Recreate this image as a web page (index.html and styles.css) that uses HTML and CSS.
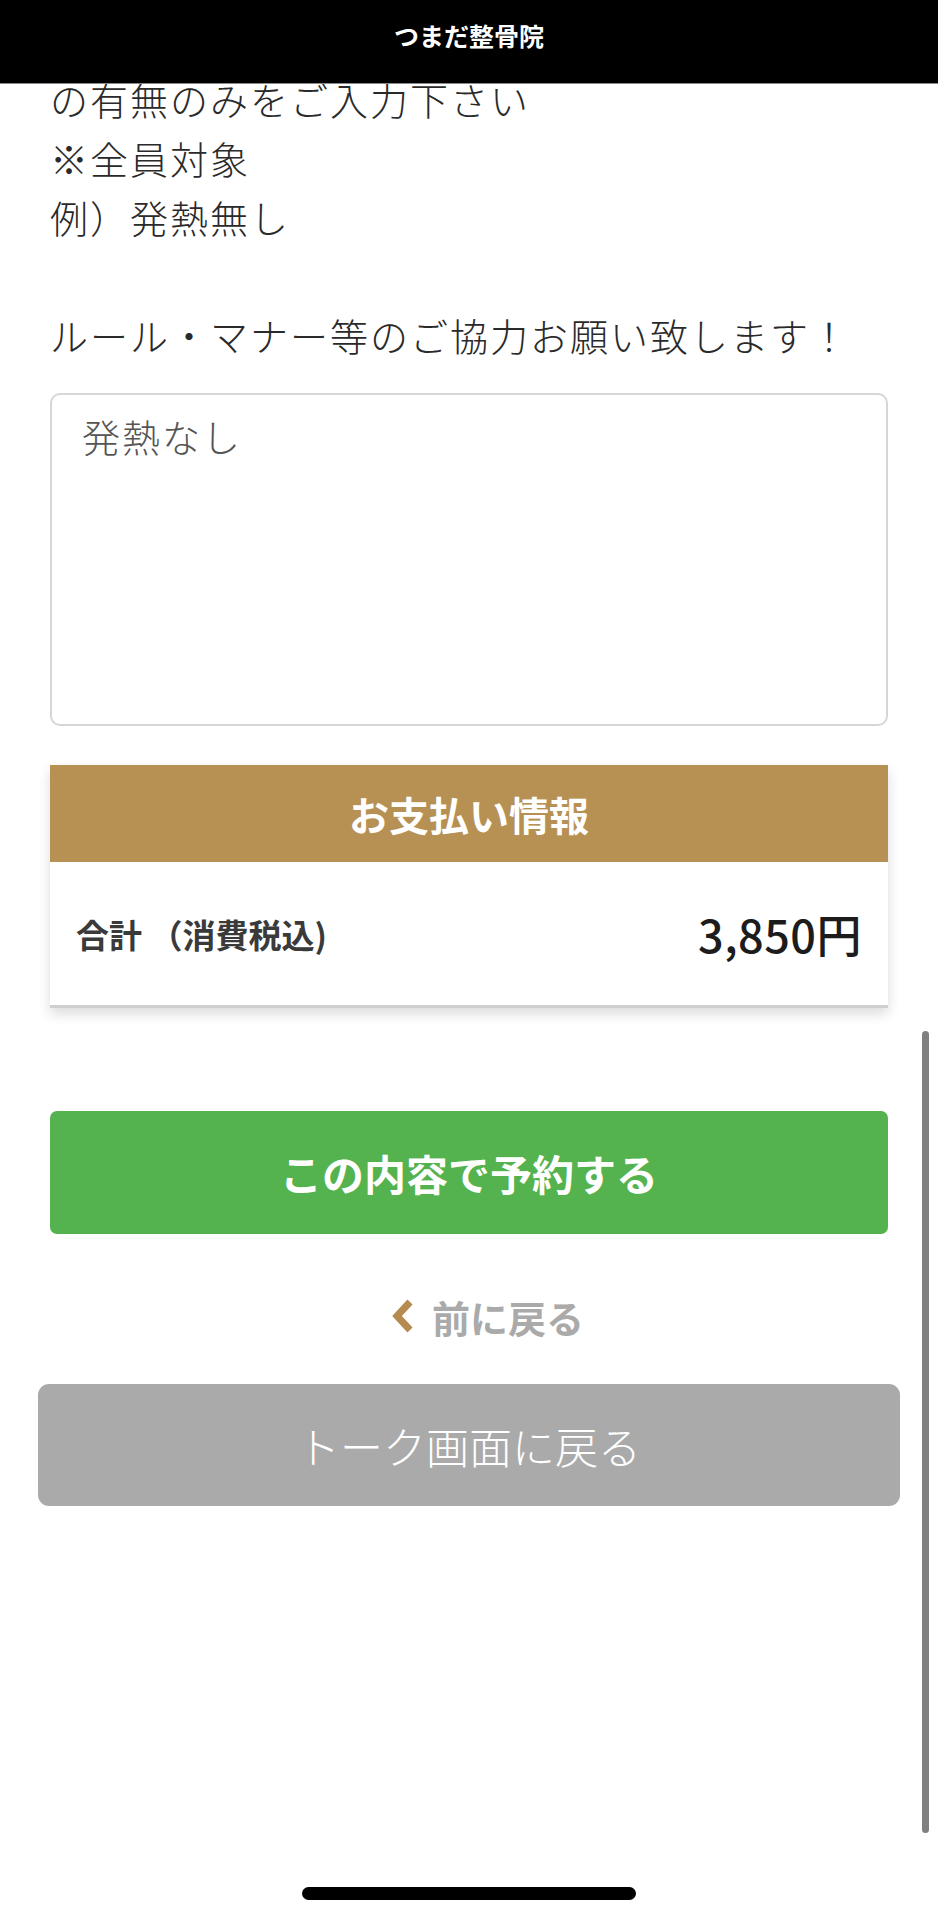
FILE: index.html
```html
<!DOCTYPE html>
<html lang="ja">
<head>
<meta charset="utf-8">
<title>つまだ整骨院</title>
<link rel="stylesheet" href="styles.css">
</head>
<body>
<header class="topbar"><span class="topbar-title">つまだ整骨院</span></header>
<main class="page">
  <div class="content">
    <p class="note">の有無のみをご入力下さい<br>※全員対象<br>例）発熱無し<br><br>ルール・マナー等のご協力お願い致します！</p>
    <textarea class="memo">発熱なし</textarea>
    <section class="pay">
      <h2 class="pay-head">お支払い情報</h2>
      <div class="pay-row">
        <span class="pay-label">合計 （消費税込)</span>
        <span class="pay-total">3,850円</span>
      </div>
    </section>
    <button class="btn-submit">この内容で予約する</button>
    <a class="back-link" href="#">
      <svg class="chev" width="22" height="34" viewBox="0 0 22 34"><polyline points="18,3 5,17 18,31" fill="none" stroke="#b58b4f" stroke-width="7" stroke-linejoin="miter"/></svg>
      <span>前に戻る</span>
    </a>
  </div>
  <div class="talk-wrap">
    <button class="btn-talk">トーク画面に戻る</button>
  </div>
</main>
<div class="scrollbar"></div>
<div class="home-indicator"></div>
</body>
</html>
```
FILE: styles.css
```css
* { box-sizing: border-box; }
html, body {
  margin: 0;
  padding: 0;
  background: #fff;
}
body {
  width: 938px;
  height: 1920px;
  overflow: hidden;
  position: relative;
  font-family: "Noto Sans CJK JP", "Noto Sans", sans-serif;
  color: #333;
}
.topbar {
  position: fixed;
  top: 0;
  left: 0;
  right: 0;
  height: 84px;
  background: #000;
  border-bottom: 1px solid #8a8a8a;
  display: flex;
  align-items: center;
  justify-content: center;
  z-index: 5;
}
.topbar-title {
  color: #fff;
  font-size: 25px;
  font-weight: 700;
  line-height: 1;
  margin-top: -12px;
}
.page {
  padding-top: 69px;
}
.content {
  padding: 0 50px;
  display: flex;
  flex-direction: column;
}
.note {
  margin: 0;
  font-size: 38px;
  line-height: 59px;
  letter-spacing: 2px;
  color: #2a2a2a;
  font-weight: 300;
}
.memo {
  margin-top: 29px;
  height: 333px;
  width: 100%;
  border: 2px solid #d6d6d6;
  border-radius: 10px;
  padding: 12px 30px;
  font-family: "Noto Sans CJK JP", "Noto Sans", sans-serif;
  font-size: 38px;
  line-height: 57px;
  letter-spacing: 2px;
  font-weight: 300;
  color: #555;
  resize: none;
  outline: none;
  background: #fff;
}
.pay {
  margin-top: 39px;
  box-shadow: 0 6px 12px rgba(0,0,0,0.14);
}
.pay-head {
  margin: 0;
  height: 97px;
  background: #b79153;
  color: #fff;
  font-size: 40px;
  font-weight: 700;
  display: flex;
  align-items: center;
  justify-content: center;
}
.pay-row {
  height: 146px;
  background: #fff;
  border-bottom: 3px solid #cfcfcf;
  display: flex;
  align-items: center;
  justify-content: space-between;
  padding: 0 26px;
}
.pay-label {
  font-size: 33px;
  font-weight: 700;
  color: #3a3a3a;
}
.pay-total {
  font-size: 45px;
  font-weight: 500;
  color: #1c1c1c;
  letter-spacing: 0.5px;
}
.btn-submit {
  margin-top: 103px;
  height: 123px;
  border: none;
  border-radius: 7px;
  background: #54b34f;
  color: #fff;
  font-family: "Noto Sans CJK JP", "Noto Sans", sans-serif;
  font-size: 42px;
  font-weight: 700;
}
.back-link {
  margin-top: 57px;
  height: 50px;
  padding-left: 38px;
  display: flex;
  align-items: center;
  justify-content: center;
  gap: 18px;
  text-decoration: none;
  color: #aaa;
  font-size: 38px;
  font-weight: 700;
}
.chev { display: block; }
.talk-wrap {
  padding: 43px 38px 0;
}
.btn-talk {
  width: 100%;
  height: 122px;
  border: none;
  border-radius: 11px;
  background: #aaaaaa;
  color: #fff;
  font-family: "Noto Sans CJK JP", "Noto Sans", sans-serif;
  font-size: 43px;
  font-weight: 300;
}
.scrollbar {
  position: absolute;
  left: 922px;
  top: 1031px;
  width: 7px;
  height: 802px;
  border-radius: 4px;
  background: #808080;
}
.home-indicator {
  position: absolute;
  left: 302px;
  top: 1887px;
  width: 334px;
  height: 13px;
  border-radius: 7px;
  background: #000;
}
```
